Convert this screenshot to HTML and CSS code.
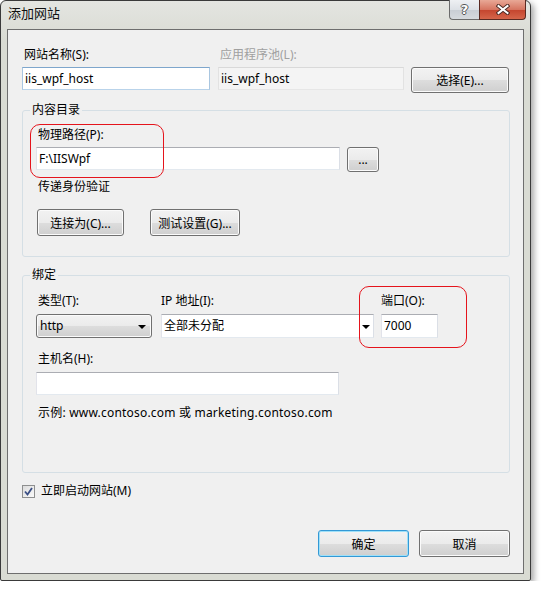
FILE: index.html
```html
<!DOCTYPE html>
<html lang="zh-CN">
<head>
    <meta charset="UTF-8">
    <title>添加网站</title>
    <link rel="stylesheet" href="styles.css">
</head>
<body>
    <div class="window">
        <div class="titlebar">
            <span class="title">添加网站</span>
            <div class="caption-buttons">
                <span class="cap-btn help"><span class="help-glyph">?</span></span>
                <span class="cap-btn close">
                    <svg width="14" height="11" viewBox="0 0 14 11">
                        <path d="M2.5 2 L11.5 9 M11.5 2 L2.5 9" stroke="#4a2a24" stroke-width="4" stroke-linecap="square"/>
                        <path d="M2.5 2 L11.5 9 M11.5 2 L2.5 9" stroke="#fff" stroke-width="2" stroke-linecap="square"/>
                    </svg>
                </span>
            </div>
        </div>

        <div class="client">
            <div class="site-row">
                <div class="field site-name">
                    <label>网站名称(S):</label>
                    <div class="textbox focused">iis_wpf_host</div>
                </div>
                <div class="field app-pool">
                    <label class="disabled">应用程序池(L):</label>
                    <div class="textbox readonly">iis_wpf_host</div>
                </div>
                <button class="btn select-btn">选择(E)...</button>
            </div>

            <fieldset class="group content-group">
                <legend>内容目录</legend>
                <div class="path-field">
                    <label>物理路径(P):</label>
                    <div class="path-row">
                        <div class="textbox path-box">F:\IISWpf</div>
                        <button class="btn browse-btn">...</button>
                    </div>
                    <span class="mark mark-path"></span>
                </div>
                <div class="auth-label">传递身份验证</div>
                <div class="auth-buttons">
                    <button class="btn connect-btn">连接为(C)...</button>
                    <button class="btn test-btn">测试设置(G)...</button>
                </div>
            </fieldset>

            <fieldset class="group binding-group">
                <legend>绑定</legend>
                <div class="binding-row">
                    <div class="field type-field">
                        <label>类型(T):</label>
                        <div class="dropdown">http<span class="arrow"></span></div>
                    </div>
                    <div class="field ip-field">
                        <label>IP 地址(I):</label>
                        <div class="textbox combo">全部未分配<span class="arrow"></span></div>
                    </div>
                    <div class="field port-field">
                        <label>端口(O):</label>
                        <div class="textbox port-box">7000</div>
                        <span class="mark mark-port"></span>
                    </div>
                </div>
                <label class="host-label">主机名(H):</label>
                <div class="textbox host-box"></div>
                <div class="example">示例: www.contoso.com 或 marketing.contoso.com</div>
            </fieldset>

            <div class="check-row">
                <span class="checkbox">
                    <svg width="9" height="9" viewBox="0 0 9 9">
                        <path d="M1 4.5 L3.5 7.5 L8 1" fill="none" stroke="#3b4f85" stroke-width="1.8"/>
                    </svg>
                </span>
                <span>立即启动网站(M)</span>
            </div>

            <div class="actions">
                <button class="btn btn-default">确定</button>
                <button class="btn">取消</button>
            </div>
        </div>
    </div>
</body>
</html>
```

FILE: styles.css
```css
:root {
    --frame: #d9dbd3;
    --client-bg: #f0f0f0;
    --group-line: #d5dfe5;
    --mark: #e5141c;
}

body {
    margin: 0;
    background-color: #fff;
    font-family: "Noto Sans", "Noto Sans CJK SC", sans-serif;
    font-size: 12px;
    color: #000;
}

.window {
    width: 531px;
    height: 581px;
    box-sizing: border-box;
    border: 1px solid #3a3a3a;
    border-radius: 6px 6px 2px 2px;
    background: linear-gradient(#e4e5e1, var(--frame) 40px);
    box-shadow: 3px 3px 6px rgba(0, 0, 0, 0.35);
    display: flex;
    flex-direction: column;
}

.titlebar {
    height: 28px;
    flex-shrink: 0;
    display: flex;
    justify-content: space-between;
    padding: 0 4px 0 7px;
}

.title {
    font-size: 13px;
    line-height: 24px;
    color: #111;
}

.caption-buttons {
    display: flex;
    margin-top: -1px;
    height: 20px;
}

.cap-btn {
    box-sizing: border-box;
    height: 20px;
    display: flex;
    align-items: center;
    justify-content: center;
    border: 1px solid #6b6b6b;
    border-top: none;
}

.help {
    width: 30px;
    border-right: none;
    border-radius: 0 0 0 4px;
    background: linear-gradient(#eef0f3, #dde1e6 50%, #c8cdd4 51%, #d6dade);
}

.help-glyph {
    font-family: "DejaVu Sans", sans-serif;
    font-weight: bold;
    font-size: 13px;
    color: #fff;
    text-shadow: 1px 0 #555, -1px 0 #555, 0 1px #555, 0 -1px #555;
}

.close {
    width: 47px;
    border-radius: 0 0 4px 0;
    border-color: #5a2a22;
    background: linear-gradient(#e8a896, #d67561 50%, #c4442d 51%, #d5654a);
}

.client {
    flex: 1;
    margin: 0 6px 6px;
    border: 1px solid #6e6e6e;
    background-color: var(--client-bg);
    padding: 17px 13px 16px 14px;
    display: flex;
    flex-direction: column;
}

label,
.auth-label,
.example {
    display: block;
    line-height: 16px;
    padding-left: 2px;
}

.disabled {
    color: #a0a0a0;
}

.textbox {
    box-sizing: border-box;
    height: 23px;
    line-height: 21px;
    padding: 0 2px;
    background-color: #fff;
    border: 1px solid;
    border-color: #abadb3 #dbdfe6 #e3e9ef #e2e3ea;
    white-space: nowrap;
    position: relative;
}

.textbox.focused {
    border-color: #7ea6cc #a9c6e0 #b9d3ea #a9c6e0;
}

.textbox.readonly {
    background-color: #f4f4f4;
    border-color: #d9d9d9 #e2e2e2 #e6e6e6 #e2e2e2;
}

.btn {
    box-sizing: border-box;
    height: 27px;
    padding: 0;
    font: inherit;
    color: #000;
    border: 1px solid #707070;
    border-radius: 3px;
    background: linear-gradient(#f2f2f2, #ebebeb 50%, #dddddd 51%, #cfcfcf);
    box-shadow: inset 0 0 0 1px #fbfbfb;
}

.btn-default {
    border-color: #3399d6;
    box-shadow: inset 0 0 0 1px #9fe0f8;
}

/* first row */
.site-row {
    display: flex;
    align-items: flex-start;
}

.field label {
    margin-bottom: 4px;
}

.site-name {
    width: 188px;
}

.app-pool {
    width: 186px;
    margin-left: 8px;
}

.select-btn {
    width: 98px;
    height: 26px;
    margin: 20px 0 0 7px;
}

/* group boxes */
.group {
    margin: 9px 0 0;
    padding: 9px 12px 20px 13px;
    border: 1px solid var(--group-line);
    border-radius: 3px;
    min-width: 0;
}

.group legend {
    padding: 0 2px;
    margin-left: -6px;
    line-height: 16px;
}

.path-field {
    position: relative;
}

.path-field label {
    margin-bottom: 4px;
}

.path-row {
    display: flex;
    align-items: flex-start;
}

.path-box {
    width: 304px;
}

.browse-btn {
    width: 32px;
    height: 25px;
    margin-left: 7px;
}

.mark {
    position: absolute;
    border: 1px solid var(--mark);
    border-radius: 10px;
    pointer-events: none;
}

.mark-path {
    left: -6px;
    top: -3px;
    width: 132px;
    height: 52px;
}

.auth-label {
    margin-top: 7px;
}

.auth-buttons {
    display: flex;
    margin-top: 14px;
}

.connect-btn {
    width: 87px;
    margin-left: 1px;
}

.test-btn {
    width: 90px;
    margin-left: 26px;
}

.binding-group {
    margin-top: 10px;
    padding: 10px 12px 51px 13px;
}

.binding-row {
    display: flex;
}

.binding-row .field label {
    margin-bottom: 5px;
}

.type-field {
    width: 116px;
}

.ip-field {
    width: 213px;
    margin-left: 9px;
}

.ip-field label,
.port-field label {
    padding-left: 0;
}

.port-field {
    width: 57px;
    margin-left: 7px;
    position: relative;
}

.dropdown {
    box-sizing: border-box;
    height: 24px;
    line-height: 22px;
    padding-left: 3px;
    border: 1px solid #707070;
    border-radius: 3px;
    background: linear-gradient(#f2f2f2, #ebebeb 50%, #dddddd 51%, #cfcfcf);
    box-shadow: inset 0 0 0 1px #fbfbfb;
    position: relative;
}

.combo,
.port-box {
    height: 24px;
    line-height: 22px;
}

.arrow {
    position: absolute;
    top: 10px;
    right: 5px;
    border-style: solid;
    border-width: 4px 4px 0;
    border-color: #000 transparent transparent;
}

.combo .arrow {
    right: 3px;
}

.mark-port {
    left: -22px;
    top: -7px;
    width: 106px;
    height: 60px;
}

.host-label {
    margin-top: 13px;
}

.host-box {
    width: 303px;
    margin-top: 5px;
}

.example {
    margin-top: 10px;
    letter-spacing: 0.2px;
}

/* bottom */
.check-row {
    display: flex;
    align-items: center;
    line-height: 16px;
    margin-top: 10px;
}

.checkbox {
    box-sizing: border-box;
    width: 13px;
    height: 13px;
    margin-right: 6px;
    border: 1px solid #8e8f8f;
    background: linear-gradient(135deg, #dcdcdc, #fafafa);
    display: flex;
    align-items: center;
    justify-content: center;
}

.actions {
    margin-top: auto;
    display: flex;
    justify-content: flex-end;
    gap: 10px;
}

.actions .btn {
    width: 91px;
}
```
